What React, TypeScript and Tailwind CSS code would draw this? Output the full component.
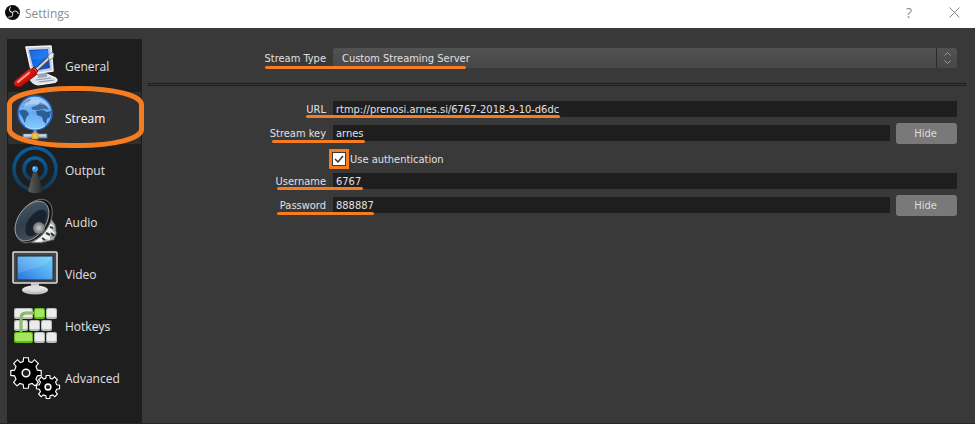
import type { ReactNode } from "react";

const GeneralIcon = () => (
  <svg width="48" height="52" viewBox="0 0 48 52" aria-hidden="true">
    <defs>
      <linearGradient id="gScreen" x1="0" y1="0" x2="1" y2="1">
        <stop offset="0" stopColor="#0a3fae" />
        <stop offset="0.5" stopColor="#1670e8" />
        <stop offset="1" stopColor="#0b3c9e" />
      </linearGradient>
      <linearGradient id="gRed" x1="0" y1="0" x2="1" y2="1">
        <stop offset="0" stopColor="#ff6a5c" />
        <stop offset="0.5" stopColor="#d4150f" />
        <stop offset="1" stopColor="#8e0705" />
      </linearGradient>
    </defs>
    <path d="M21 36l14-2 9 4c2 2 1 4-1 4.500l-17 2.500c-5-1-7-3-8-6z" fill="#dfe2ee" stroke="#fff" />
    <path d="M24 40l15-2M27 42l15-2" stroke="#8d93a8" />
    <path d="M25 33h10v4l-9 1z" fill="#9ca3b8" />
    <path d="M14 7L39 6 41 31 20 34z" fill="#c4cbe0" stroke="#f4f6fc" strokeWidth="1.500" strokeLinejoin="round" />
    <path d="M17 10l19-1 2 19-16 3z" fill="url(#gScreen)" />
    <path d="M18 11l17-1 1 7c-6 3-12 3-17 2z" fill="#2a80ef" opacity=".65" />
    <path d="M24 30L38 17" stroke="#4a4d55" strokeWidth="4" />
    <path d="M24 30L38 17" stroke="#d4d7dc" strokeWidth="2" />
    <path d="M36 16l4-4 2 2-1 4-4 2z" fill="#e8ebef" stroke="#777c86" strokeWidth=".8" />
    <path d="M22 27l4 4-3 4-4-5z" fill="#e6382d" stroke="#8c0b08" />
    <path d="M16 30c3-3 9 1 8 5L9 46c-4 2-9-1-6-5z" fill="url(#gRed)" stroke="#a30c08" />
    <path d="M17 33L6 42" stroke="#ff9d90" strokeWidth="2" strokeLinecap="round" />
  </svg>
);

const StreamIcon = () => (
  <svg width="48" height="52" viewBox="0 0 48 52" aria-hidden="true">
    <defs>
      <linearGradient id="gSea" x1="0" y1="0" x2="0" y2="1">
        <stop offset="0" stopColor="#a6cff8" />
        <stop offset="0.5" stopColor="#66aaf0" />
        <stop offset="1" stopColor="#8acbff" />
      </linearGradient>
    </defs>
    <path d="M23 38v6" stroke="#98a9c3" strokeWidth="3" />
    <rect x="11" y="42" width="24" height="4" fill="#a9bdd8" stroke="#5f6e86" strokeWidth=".8" />
    <path d="M12 43h22" stroke="#e3eefb" />
    <rect x="20" y="41" width="6" height="6" fill="#f1c64e" stroke="#b88c22" strokeWidth=".8" />
    <circle cx="23" cy="21" r="17" fill="url(#gSea)" stroke="#2468cc" strokeWidth="1.500" />
    <path d="M7 19c3-2 6-1 8 0l2 3-3 4-1 5c-2-3-2-6-5-9z" fill="#2b6095" />
    <path d="M9 14c3-5 7-7 10-7l-2 3-4 2-2 4z" fill="#5e8fc6" />
    <path d="M19 16c3-3 7-1 9-6l6 3 3 5-5-1-5 1-6 0z" fill="#3e6da6" />
    <path d="M24 19l7-1 4 2 4-1-1 6-3 2-1 5-3-3-1-4-5-2z" fill="#2b5f95" />
    <path d="M9 15C13 6 32 5 37 15c-7-4-20-4-28 0z" fill="#fff" opacity=".25" />
    <path d="M13 34c6 4 14 4 20 0" stroke="#c1edff" fill="none" opacity=".8" />
  </svg>
);

const OutputIcon = () => (
  <svg width="48" height="52" viewBox="0 0 48 52" aria-hidden="true">
    <defs>
      <linearGradient id="gWave" x1="0" y1="0" x2="0" y2="1">
        <stop offset="0" stopColor="#075f9e" />
        <stop offset="1" stopColor="#123a57" />
      </linearGradient>
      <linearGradient id="gMast" x1="0" y1="0" x2="1" y2="0">
        <stop offset="0" stopColor="#606060" />
        <stop offset="1" stopColor="#282828" />
      </linearGradient>
    </defs>
    <circle cx="23" cy="25" r="21" fill="none" stroke="url(#gWave)" strokeWidth="3.500" />
    <circle cx="23" cy="25" r="11" fill="none" stroke="url(#gWave)" strokeWidth="3.500" />
    <path d="M22 25h2l7 22c-4 3-11 3-15 0z" fill="url(#gMast)" />
    <circle cx="23" cy="25" r="3" fill="#2d9bf3" />
    <circle cx="22" cy="24" r="1" fill="#a9e1ff" />
  </svg>
);

const AudioIcon = () => (
  <svg width="48" height="52" viewBox="0 0 48 52" aria-hidden="true">
    <defs>
      <linearGradient id="gCone" x1="0" y1="0" x2="1" y2="1">
        <stop offset="0" stopColor="#4c5f71" />
        <stop offset="0.5" stopColor="#303d4b" />
        <stop offset="1" stopColor="#4a545e" />
      </linearGradient>
      <radialGradient id="gCap">
        <stop offset="0" stopColor="#c9c9c9" />
        <stop offset="1" stopColor="#6c6f72" />
      </radialGradient>
    </defs>
    <path d="M38 21l5 7c2 3 0 6 2 9l-3 7-12 3-11 0z" fill="#a9aeab" stroke="#3a3d3c" />
    <path d="M38 27l4 3-2 4 3 3-5 3 0 4-5-1-4 3-7 0z" fill="#f0f2f0" />
    <path d="M38 31l3 1M34 37l4 2M30 42l3 2M39 37l3 3" stroke="#35383a" strokeWidth="2" />
    <ellipse cx="22" cy="25" rx="15" ry="24" transform="rotate(34 22 25)" fill="#111213" stroke="#6b6d6e" />
    <ellipse cx="20" cy="25" rx="14" ry="22" transform="rotate(34 20 25)" fill="url(#gCone)" stroke="#a9acae" strokeWidth=".8" />
    <ellipse cx="24" cy="27" rx="8" ry="15" transform="rotate(34 24 27)" fill="#10161e" opacity=".7" />
    <circle cx="27" cy="32" r="6" fill="url(#gCap)" />
  </svg>
);

const VideoIcon = () => (
  <svg width="48" height="52" viewBox="0 0 48 52" aria-hidden="true">
    <defs>
      <linearGradient id="gVid" x1="1" y1="0" x2="0" y2="1">
        <stop offset="0" stopColor="#72d4fc" />
        <stop offset="0.5" stopColor="#51a8f1" />
        <stop offset="1" stopColor="#2673dc" />
      </linearGradient>
      <linearGradient id="gStand" x1="0" y1="0" x2="0" y2="1">
        <stop offset="0" stopColor="#fafafa" />
        <stop offset="1" stopColor="#b3b3b3" />
      </linearGradient>
    </defs>
    <path d="M19 35h8v7h-8z" fill="#b9b9b9" />
    <ellipse cx="23" cy="42" rx="13" ry="4.500" fill="url(#gStand)" />
    <path d="M18 38h10l1 4c-3 2-9 2-12 0z" fill="#dedede" />
    <rect x="1" y="4" width="44" height="31" rx="1" fill="#454545" stroke="#dedede" strokeWidth="1.500" />
    <rect x="5" y="8" width="36" height="24" fill="url(#gVid)" stroke="#242e38" />
    <path d="M6 9h34l-7 8L6 25z" fill="#fff" opacity=".13" />
  </svg>
);

const keyCaps = [
  { x: 2, y: 8, w: 19, on: false },
  { x: 22, y: 8, w: 11, on: true },
  { x: 34, y: 8, w: 11, on: false },
  { x: 2, y: 20, w: 14, on: false },
  { x: 17, y: 20, w: 11, on: false },
  { x: 29, y: 20, w: 11, on: false },
  { x: 2, y: 32, w: 19, on: true },
  { x: 22, y: 32, w: 11, on: false },
  { x: 34, y: 32, w: 11, on: false },
];

const HotkeysIcon = () => (
  <svg width="48" height="52" viewBox="0 0 48 52" aria-hidden="true">
    {keyCaps.map((k) => (
      <g key={`${k.x}-${k.y}`}>
        <rect x={k.x} y={k.y} width={k.w} height="11" rx="2" fill={k.on ? "#62ba1e" : "#b9bbb7"} />
        <rect x={k.x + 1} y={k.y + 1} width={k.w - 2} height="8" rx="1.500" fill={k.on ? "#a5e55f" : "#ecedeb"} />
      </g>
    ))}
    <path d="M9 32V18c0-4 2-5 5-5h8" fill="none" stroke="#76ad50" strokeWidth="3" />
    <path d="M9 32V18c0-4 2-5 5-5h8" fill="none" stroke="#a6cf87" />
  </svg>
);

const gearPath =
  "M-3 -12L-2.500 -16H2.500L3 -12L6 -11L9 -14L13 -10L10.500 -7L12 -3L16 -2.500V2.500L12 3L10.500 6.500L13 10L9.500 13.500L6.500 11L3 12L2.500 16H-2.500L-3 12L-6.500 11L-9.500 13.500L-13 10L-10.500 6.500L-12 3L-16 2.500V-2.500L-12 -3L-10.500 -7L-13 -10L-9 -14L-6 -11Z";

const AdvancedIcon = () => (
  <svg width="48" height="52" viewBox="0 0 48 52" className="overflow-visible" aria-hidden="true">
    <g fill="#000" stroke="#fff" strokeWidth="1.200">
      <g transform="translate(14 21) scale(.95)">
        <path d={gearPath} />
        <circle r="4" fill="#1f1e1f" strokeWidth="1.600" />
      </g>
      <g transform="translate(36 35) scale(.72)">
        <path d={gearPath} strokeWidth="1.600" />
        <circle r="4" fill="#1f1e1f" strokeWidth="2.100" />
      </g>
    </g>
  </svg>
);

const ObsLogo = () => (
  <svg width="15" height="15" viewBox="0 0 30 30" className="-mt-1" aria-hidden="true">
    <circle cx="15" cy="15" r="15" fill="#0b0b0b" />
    <g fill="none" stroke="#d4d4d4" strokeWidth="2.200" strokeLinecap="round">
      <path d="M15 15c-6-1-8-6-4-11" />
      <path d="M15 15c-6-1-8-6-4-11" transform="rotate(120 15 15)" />
      <path d="M15 15c-6-1-8-6-4-11" transform="rotate(240 15 15)" />
    </g>
  </svg>
);

const sections: { name: string; icon: ReactNode }[] = [
  { name: "General", icon: <GeneralIcon /> },
  { name: "Stream", icon: <StreamIcon /> },
  { name: "Output", icon: <OutputIcon /> },
  { name: "Audio", icon: <AudioIcon /> },
  { name: "Video", icon: <VideoIcon /> },
  { name: "Hotkeys", icon: <HotkeysIcon /> },
  { name: "Advanced", icon: <AdvancedIcon /> },
];

/* Hand-drawn orange line under a label and its value. */
const Underline = ({ className }: { className: string }) => (
  <span className={`pointer-events-none absolute h-[3px] rounded-full bg-[#f57c1f] ${className}`} />
);

type FieldProps = {
  id: string;
  label: string;
  value: string;
  line: string;
  hide?: boolean;
};

const Field = ({ id, label, value, line, hide }: FieldProps) => (
  <div className="relative flex h-6 items-center">
    <label htmlFor={id} className="w-[184px] shrink-0 pt-0.5 text-right">
      {label}
    </label>
    <input
      id={id}
      type="text"
      defaultValue={value}
      className="ml-[7px] h-4 min-w-0 flex-1 bg-[#1f1e1f] px-[3px] pt-px outline-none"
    />
    {hide && (
      <button type="button" className="ml-1.5 h-[21px] w-[61px] rounded-[3px] bg-[#797979] pt-0.5 pr-0.5 text-[#dcdcdc]">
        Hide
      </button>
    )}
    <Underline className={line} />
  </div>
);

export default function App() {
  return (
    <div className="flex min-h-screen flex-col border-b border-[#2b2429] bg-[#3a393a] font-['Open_Sans','Noto_Sans',sans-serif] text-[#e1e0e1]">
      <header className="flex h-7 items-center bg-white pr-[15px] pl-[5px] text-[#8c8c8c]">
        <ObsLogo />
        <h1 className="ml-[5px] flex-1 text-[12px] leading-4">Settings</h1>
        <button type="button" aria-label="Help" className="mr-[33px] -mt-0.5 w-3 text-[14px] leading-4">
          ?
        </button>
        <button type="button" aria-label="Close" className="-mt-1 flex w-3 justify-center">
          <svg width="11" height="11" viewBox="0 0 11 11" aria-hidden="true">
            <path d="M.5 .5l10 10M10.500 .5l-10 10" stroke="#858585" />
          </svg>
        </button>
      </header>

      <div className="flex flex-1 pt-[11px] pl-[7px]">
        <nav className="w-[135px] shrink-0 bg-[#1f1e1f] p-px">
          <ul>
            {sections.map((s) => (
              <li key={s.name} className="relative">
                <button
                  type="button"
                  className={`flex h-[52px] w-full items-center gap-[5px] pl-1 text-left text-[12px] leading-4 ${
                    s.name === "Stream" ? "bg-[#302f30] text-white" : ""
                  }`}
                >
                  {s.icon}
                  <span className="pt-0.5">{s.name}</span>
                </button>
                {s.name === "Stream" && (
                  <svg
                    className="pointer-events-none absolute -top-[6px] -left-px z-10"
                    width="137"
                    height="62"
                    viewBox="0 0 137 62"
                    aria-hidden="true"
                  >
                    <rect x="2.500" y="2.500" width="132" height="57" rx="62" ry="16" fill="none" stroke="#f57c1f" strokeWidth="5" />
                  </svg>
                )}
              </li>
            ))}
          </ul>
        </nav>

        <main className="min-w-0 flex-1 pr-[9px] pl-1.5 font-['DejaVu_Sans_Condensed','DejaVu_Sans',sans-serif] text-[11px] leading-[14px]">
          <div className="relative mt-[9px] mr-[9px] flex h-5 items-center">
            <label htmlFor="type" className="w-[178px] shrink-0 pt-0.5 text-right">
              Stream Type
            </label>
            <div className="relative ml-[7px] h-5 flex-1">
              <select
                id="type"
                className="h-5 w-full appearance-none rounded-[3px] bg-linear-to-b from-[#535253] to-[#484748] px-[9px] pt-0.5 outline-none"
              >
                <option>Custom Streaming Server</option>
              </select>
              <span className="pointer-events-none absolute top-0 right-0 flex h-5 w-[21px] items-center justify-center border-l border-[#2b2a2b]">
                <svg width="7" height="12" viewBox="0 0 7 12" aria-hidden="true">
                  <path d="M.5 3.500l3-3 3 3M.5 8.500l3 3 3-3" fill="none" stroke="#9a9a9a" />
                </svg>
              </span>
            </div>
            <Underline className="top-[18px] left-[117px] w-[201px]" />
          </div>

          <hr className="mt-[15px] h-[3px] border border-[#1f1e1f]" />

          <form className="mt-[11px] mr-[9px] -ml-1.5">
            <Field id="url" label="URL" value="rtmp://prenosi.arnes.si/6767-2018-9-10-d6dc" line="top-[18px] left-[164px] w-[254px]" />
            <Field id="key" label="Stream key" value="arnes" line="top-[19px] left-[130px] w-[93px]" hide />
            <div className="flex h-6 items-center pt-1 pl-[187px]">
              <label className="flex items-center">
                <input
                  type="checkbox"
                  defaultChecked
                  className="peer size-5 appearance-none border-[3px] border-[#f57c1f] bg-white shadow-[inset_0_0_0_1px_#3a393a]"
                />
                <svg className="-ml-4 peer-[:not(:checked)]:invisible" width="12" height="12" viewBox="0 0 12 12" aria-hidden="true">
                  <path d="M2 6l3 3 5-6" fill="none" stroke="#333" strokeWidth="1.500" />
                </svg>
                <span className="ml-[5px] pt-0.5">Use authentication</span>
              </label>
            </div>
            <Field id="user" label="Username" value="6767" line="top-[18px] left-[135px] w-[86px]" />
            <Field id="pass" label="Password" value="888887" line="top-[19px] left-[135px] w-[97px]" hide />
          </form>
        </main>
      </div>
    </div>
  );
}
